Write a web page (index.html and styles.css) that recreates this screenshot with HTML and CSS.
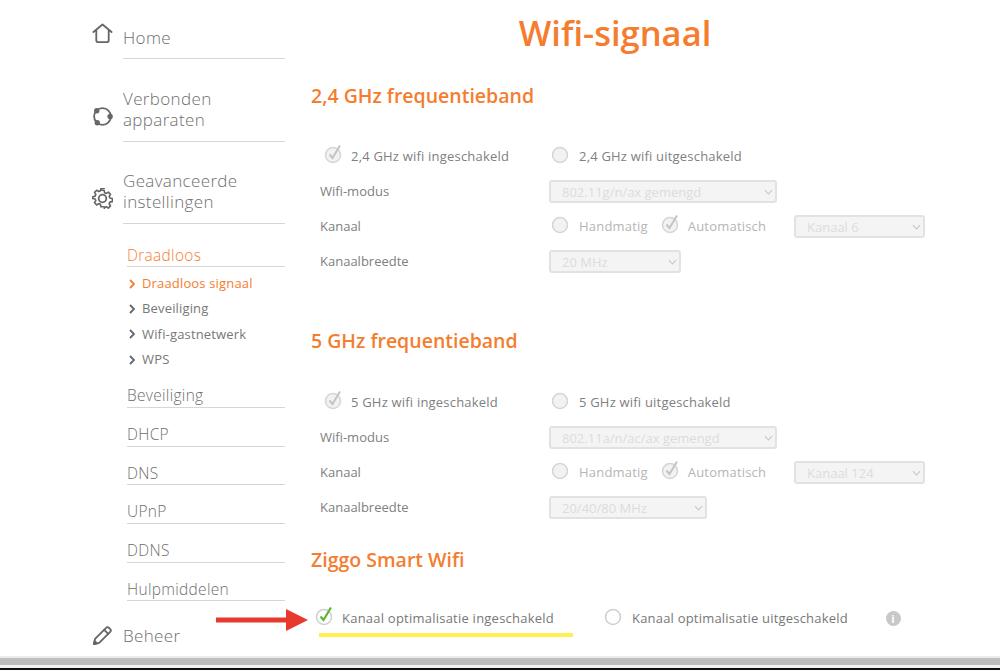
FILE: index.html
```html
<!DOCTYPE html>
<html lang="nl">
<head>
<meta charset="utf-8">
<title>Wifi-signaal</title>
<link rel="stylesheet" href="styles.css">
</head>
<body>
<div class="page">
  <div class="layout">
    <nav class="sidebar">
      <a class="top top-home"><svg class="ico" viewBox="0 0 22 22"><path d="M1.500 9.500 11 1.500l9.500 8M4.500 7.500v10.500a2 2 0 0 0 2 2h9a2 2 0 0 0 2-2V7.500" /></svg><span class="top-text">Home</span></a>
      <a class="top top-dev"><svg class="ico" viewBox="0 0 22 22"><circle cx="11" cy="11" r="8.800"/><circle class="dot" cx="5" cy="5" r="2.800"/><circle class="dot" cx="19" cy="11" r="2.800"/><circle class="dot" cx="5.500" cy="17.500" r="2.800"/></svg><span class="top-text">Verbonden<br>apparaten</span></a>
      <a class="top top-adv"><svg class="ico" viewBox="0 0 22 22"><path d="M9.200 1.500h3.600l.6 2.800 1.900.8 2.400-1.500 2.500 2.500-1.500 2.400.8 1.900 2.800.6v3.600l-2.800.6-.8 1.900 1.500 2.400-2.500 2.500-2.400-1.500-1.900.8-.6 2.800H9.200" transform="translate(1 1) scale(.91)"/><path d="M12.800 20.500H9.200l-.6-2.800-1.900-.8-2.400 1.500-2.500-2.500 1.500-2.400-.8-1.900-2.800-.6V8.900l2.800-.6.8-1.900-1.500-2.400 2.500-2.500 2.400 1.500 1.900-.8.6-2.800h3.600" transform="translate(1 1) scale(.91)"/><circle cx="11" cy="11" r="4"/></svg><span class="top-text">Geavanceerde<br>instellingen</span></a>
      <div class="cat cat-first active">Draadloos</div>
      <ul class="sub">
        <li class="active"><svg class="chev" viewBox="0 0 6 10"><path d="M1 1l4 4-4 4"/></svg>Draadloos signaal</li>
        <li><svg class="chev" viewBox="0 0 6 10"><path d="M1 1l4 4-4 4"/></svg>Beveiliging</li>
        <li><svg class="chev" viewBox="0 0 6 10"><path d="M1 1l4 4-4 4"/></svg>Wifi-gastnetwerk</li>
        <li><svg class="chev" viewBox="0 0 6 10"><path d="M1 1l4 4-4 4"/></svg>WPS</li>
      </ul>
      <div class="cat">Beveiliging</div>
      <div class="cat">DHCP</div>
      <div class="cat">DNS</div>
      <div class="cat">UPnP</div>
      <div class="cat">DDNS</div>
      <div class="cat">Hulpmiddelen</div>
      <a class="beheer"><svg class="ico" viewBox="0 0 22 22"><path d="M2 20l1.200-5.500L14.800 2.900a2 2 0 0 1 2.800 0l1.500 1.500a2 2 0 0 1 0 2.800L7.500 18.800z"/><path d="M12.800 5l4.200 4.200"/><path class="fillp" d="M2 20l.7-3.200 2.500 2.500z"/></svg><span class="top-text">Beheer</span></a>
    </nav>
    <main class="main">
      <h1 class="title">Wifi-signaal</h1>

      <h2 class="band band-first">2,4 GHz frequentieband</h2>
      <div class="rows">
        <div class="row radios">
          <span class="opt opt-a"><svg class="radio" viewBox="0 0 20 20"><circle class="ring-off" cx="9" cy="11" r="7.500"/><path class="tick-off" d="M5.500 10.500 8.500 14 16 1.500"/></svg><span class="lbl">2,4 GHz wifi ingeschakeld</span></span>
          <span class="opt"><svg class="radio" viewBox="0 0 20 20"><circle class="ring-off" cx="9" cy="11" r="7.500"/></svg><span class="lbl">2,4 GHz wifi uitgeschakeld</span></span>
        </div>
        <div class="row"><span class="name">Wifi-modus</span><span class="sel w-228">802.11g/n/ax gemengd<svg viewBox="0 0 10 6"><path d="M1 1l4 4 4-4"/></svg></span></div>
        <div class="row"><span class="name">Kanaal</span>
          <span class="opt dim opt-man"><svg class="radio" viewBox="0 0 20 20"><circle class="ring-off" cx="9" cy="11" r="7.500"/></svg><span class="lbl">Handmatig</span></span>
          <span class="opt dim opt-auto"><svg class="radio" viewBox="0 0 20 20"><circle class="ring-off" cx="9" cy="11" r="7.500"/><path class="tick-off" d="M5.500 10.500 8.500 14 16 1.500"/></svg><span class="lbl">Automatisch</span></span>
          <span class="sel w-131 sel-kanaal">Kanaal 6<svg viewBox="0 0 10 6"><path d="M1 1l4 4 4-4"/></svg></span>
        </div>
        <div class="row"><span class="name">Kanaalbreedte</span><span class="sel w-132">20 MHz<svg viewBox="0 0 10 6"><path d="M1 1l4 4 4-4"/></svg></span></div>
      </div>

      <h2 class="band band-second">5 GHz frequentieband</h2>
      <div class="rows">
        <div class="row radios">
          <span class="opt opt-a"><svg class="radio" viewBox="0 0 20 20"><circle class="ring-off" cx="9" cy="11" r="7.500"/><path class="tick-off" d="M5.500 10.500 8.500 14 16 1.500"/></svg><span class="lbl">5 GHz wifi ingeschakeld</span></span>
          <span class="opt"><svg class="radio" viewBox="0 0 20 20"><circle class="ring-off" cx="9" cy="11" r="7.500"/></svg><span class="lbl">5 GHz wifi uitgeschakeld</span></span>
        </div>
        <div class="row"><span class="name">Wifi-modus</span><span class="sel w-228">802.11a/n/ac/ax gemengd<svg viewBox="0 0 10 6"><path d="M1 1l4 4 4-4"/></svg></span></div>
        <div class="row"><span class="name">Kanaal</span>
          <span class="opt dim opt-man"><svg class="radio" viewBox="0 0 20 20"><circle class="ring-off" cx="9" cy="11" r="7.500"/></svg><span class="lbl">Handmatig</span></span>
          <span class="opt dim opt-auto"><svg class="radio" viewBox="0 0 20 20"><circle class="ring-off" cx="9" cy="11" r="7.500"/><path class="tick-off" d="M5.500 10.500 8.500 14 16 1.500"/></svg><span class="lbl">Automatisch</span></span>
          <span class="sel w-131 sel-kanaal">Kanaal 124<svg viewBox="0 0 10 6"><path d="M1 1l4 4 4-4"/></svg></span>
        </div>
        <div class="row"><span class="name">Kanaalbreedte</span><span class="sel w-158">20/40/80 MHz<svg viewBox="0 0 10 6"><path d="M1 1l4 4 4-4"/></svg></span></div>
      </div>

      <h2 class="band band-third">Ziggo Smart Wifi</h2>
      <div class="smart">
        <span class="opt opt-s1"><svg class="radio" viewBox="0 0 20 20"><circle class="ring-on" cx="9" cy="11" r="7.500"/><path class="tick-on" d="M5.500 10.500 8.500 14 16 1.500"/></svg><span class="lbl">Kanaal optimalisatie ingeschakeld</span></span>
        <span class="opt opt-s2"><svg class="radio" viewBox="0 0 20 20"><circle class="ring-on" cx="9" cy="11" r="7.500"/></svg><span class="lbl">Kanaal optimalisatie uitgeschakeld</span></span>
        <span class="info">i</span>
        <svg class="arrow" viewBox="0 0 92 22"><path d="M0 8.500h70V0l22 11-22 11v-8.500H0z"/></svg>
        <span class="marker"></span>
      </div>
    </main>
  </div>
  <footer class="foot"><div class="foot-line"></div><div class="foot-bar"></div><div class="foot-gap"></div><div class="foot-black"></div></footer>
</div>
</body>
</html>
```

FILE: styles.css
```css
* { box-sizing: border-box; }
html, body { margin: 0; padding: 0; height: 670px; overflow: hidden; background: #fff; }
body { font-family: "Open Sans", "Noto Sans", "Liberation Sans", sans-serif; color: #777; }
.page { height: 670px; display: flex; flex-direction: column; }
.layout { height: 655px; display: flex; overflow: hidden; }

.sidebar { width: 311px; flex: none; padding-left: 92px; padding-right: 26px; }
.top, .beheer { display: flex; align-items: center; color: #6e6e6e; font-size: 17px; line-height: 21px; font-weight: 300; letter-spacing: .35px; }
.top-text { flex: 1; margin-left: 10px; padding-bottom: 11px; border-bottom: 1px solid #d6d6d6; }
.ico { width: 21px; height: 21px; flex: none; fill: none; stroke: #666; stroke-width: 1.900; stroke-linecap: round; stroke-linejoin: round; }
.dot { fill: #666; stroke: none; }
.fillp { fill: #666; }
.top-home { height: 59px; padding-top: 25px; }
.top-home .top-text { height: 34px; padding-top: 2px; }
.top-home .ico { align-self: flex-start; margin-top: -2px; }
.top-dev { margin-top: 29px; }
.top-adv { margin-top: 28px; }
.top-dev .ico, .top-adv .ico { margin-top: 2px; }

.cat { margin-left: 35px; height: 38.700px; line-height: 25px; padding-top: 14px; border-bottom: 1px solid #d6d6d6; font-size: 15.500px; font-weight: 300; letter-spacing: .3px; color: #6e6e6e; }
.cat-first { margin-top: 4px; height: 39px; padding-top: 15px; }
.cat.active { color: #f47d30; }
.sub { list-style: none; margin: 4px 0 0 35px; padding: 0; height: 104px; font-size: 13px; font-weight: 400; letter-spacing: .16px; color: #777; }
.sub li { height: 25.400px; line-height: 25.400px; display: flex; align-items: center; }
.sub li.active { color: #f47d30; }
.sub + .cat { margin-top: -4px; height: 37px; padding-top: 12px; }
.chev { width: 6px; height: 10px; margin-right: 7px; margin-left: 2px; fill: none; stroke: #666; stroke-width: 1.800; }
.active .chev { stroke: #f47d30; }
.beheer { margin-top: 24px; }
.beheer .top-text { padding: 0; border: 0; margin-left: 10px; }

.main { flex: 1; min-width: 0; padding-right: 75px; }
.title { margin: 0; text-align: center; color: #f47d30; font-size: 34.500px; line-height: 44px; font-weight: 600; padding: 11px 6px 0 0; height: 55px; }
.band { margin: 0; color: #f47d30; font-size: 19.500px; line-height: 26px; font-weight: 600; }
.band-first { margin-top: 28px; }
.band-second { margin-top: 50px; }
.band-third { margin-top: 23px; }
.rows { padding-left: 9px; }
.band-first + .rows { margin-top: 29px; }
.band-second + .rows { margin-top: 30px; }
.row { display: flex; align-items: center; height: 35px; font-size: 13px; font-weight: 400; color: #808080; }
.name { width: 229px; flex: none; }
.opt { display: inline-flex; align-items: center; }
.lbl { margin-left: 8px; letter-spacing: .2px; }
.radio { width: 20px; height: 20px; flex: none; margin-top: -4px; fill: none; }
.opt-a { width: 227px; margin-left: 4px; }
.opt-a .lbl { margin-left: 7px; }
.ring-off { fill: #f2f2f2; stroke: #d5d5d5; stroke-width: 1.500; }
.tick-off { stroke: #c4c4c4; stroke-width: 2; fill: none; }
.ring-on { fill: #fff; stroke: #cfcfcf; stroke-width: 1.500; }
.tick-on { stroke: #5cb531; stroke-width: 2.200; fill: none; }
.dim { color: #b5b5b5; }
.opt-man { margin-left: 2px; }
.dim.opt-auto { margin-left: 13px; }
.dim.opt-auto .lbl { margin-left: 7px; }
.sel { height: 23px; margin-top: 2px; display: inline-flex; align-items: center; justify-content: space-between; padding: 0 2px 0 11px; border: 2px solid #e2e2e2; border-radius: 3px; background: #f4f4f4; color: #dcdcdc; font-size: 13px; }
.sel svg { width: 9px; height: 6px; fill: none; stroke: #c8c8c8; stroke-width: 1.300; }
.sel-kanaal { margin-left: auto; }
.w-228 { width: 228px; }
.w-131 { width: 131px; }
.w-132 { width: 132px; }
.w-158 { width: 158px; }

.smart { position: relative; height: 40px; margin-top: 25px; display: flex; align-items: center; font-size: 13px; color: #777; }
.opt-s1 { margin-left: 4px; width: 289px; }
.opt-s1 .lbl { margin-left: 7px; letter-spacing: .23px; }
.opt-s2 { width: 281.500px; }
.info { width: 15px; height: 15px; border-radius: 50%; background: #c8c8c8; color: #fff; font-size: 11px; font-weight: 700; line-height: 15px; text-align: center; }
.arrow { position: absolute; left: -95px; top: 11px; width: 92px; height: 22px; fill: #e8392f; }
.marker { position: absolute; left: 8px; top: 35px; width: 254px; height: 4px; background: #fff04f; }

.foot { flex: 1; display: flex; flex-direction: column; }
.foot-line { height: 2px; background: #ececec; margin-top: 1px; }
.foot-bar { height: 7px; background: #bdbdbd; }
.foot-gap { height: 3px; background: #f4f4f4; }
.foot-black { flex: 1; background: #111; }
```
